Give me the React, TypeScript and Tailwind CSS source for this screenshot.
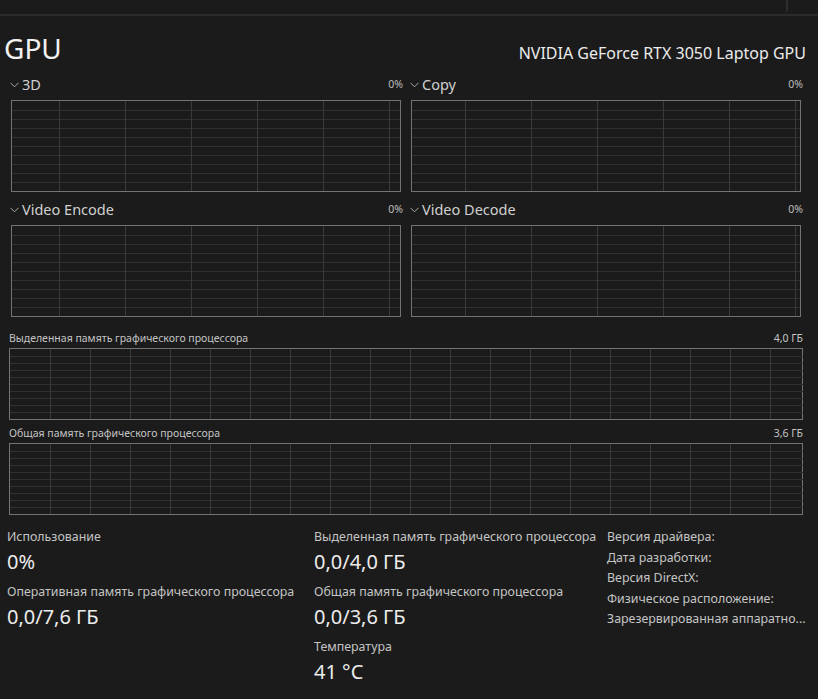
import React from "react";

const FONT = { fontFamily: '"Noto Sans", "Open Sans", sans-serif' };

type GridProps = {
  w: number;
  h: number;
  rows: number;
  colStart: number;
  colStep: number;
};

function Grid({ w, h, rows, colStart, colStep }: GridProps) {
  const hs: number[] = [];
  for (let i = 1; i < rows; i++) hs.push(Math.round((h / rows) * i) + 0.5);
  const vs: number[] = [];
  for (let x = colStart; x < w; x += colStep) vs.push(x + 0.5);
  return (
    <svg width={w} height={h} className="block">
      {hs.map((y) => (
        <line key={`h${y}`} x1={0} x2={w} y1={y} y2={y} stroke="#303030" strokeWidth={1} />
      ))}
      {vs.map((x) => (
        <line key={`v${x}`} x1={x} x2={x} y1={0} y2={h} stroke="#3a3a3a" strokeWidth={1} />
      ))}
    </svg>
  );
}

function Chevron() {
  return (
    <svg width="9" height="6" viewBox="0 0 9 6" className="mr-[3px] mt-[1px]">
      <path d="M0.5 0.8 L4.5 4.8 L8.5 0.8" fill="none" stroke="#a8a8a8" strokeWidth="1" />
    </svg>
  );
}

function EngineChart({ title, colStart }: { title: string; colStart: number }) {
  return (
    <div className="flex flex-col">
      <div className="flex h-[26px] items-start justify-between pl-[1px] pt-[1px]">
        <div className="flex items-center text-[14.5px] leading-[18px] text-[#d0d0d0]">
          <Chevron />
          {title}
        </div>
        <span className="pt-[1px] text-[10.5px] leading-[16px] text-[#bdbdbd]">0%</span>
      </div>
      <div className="mx-[2px] border border-[#737373]">
        <Grid w={388} h={90} rows={10} colStart={colStart} colStep={66} />
      </div>
    </div>
  );
}

function MemoryChart({ title, total }: { title: string; total: string }) {
  return (
    <div className="flex flex-col">
      <div className="flex h-[23px] items-end justify-between pb-[3px] text-[10.5px] leading-[14px] text-[#c4c4c4]">
        <span>{title}</span>
        <span>{total}</span>
      </div>
      <div className="border border-[#737373]">
        <Grid w={793} h={70} rows={10} colStart={40} colStep={40} />
      </div>
    </div>
  );
}

function Stat({ label, value }: { label: string; value: string }) {
  return (
    <div className="flex flex-col">
      <span className="h-[20px] whitespace-nowrap text-[12.4px] leading-[20px] text-[#c4c4c4]">{label}</span>
      <span className="h-[35px] text-[20px] leading-[30px] text-[#ececec]">{value}</span>
    </div>
  );
}

export default function App() {
  const info = [
    "Версия драйвера:",
    "Дата разработки:",
    "Версия DirectX:",
    "Физическое расположение:",
    "Зарезервированная аппаратно...",
  ];

  return (
    <div className="h-[699px] w-[818px] overflow-hidden bg-[#1b1b1b]" style={FONT}>
      <div className="flex h-[14px] justify-end pr-[30px]">
        <div className="h-[11px] w-[2px] bg-[#2e2e2e]" />
      </div>
      <div className="h-[2px] bg-[#2b2b2b]" />

      <div className="flex items-end justify-between pl-[4px] pr-[12px] pt-[14px]">
        <h1 className="text-[28px] leading-[36px] text-[#f2f2f2]">GPU</h1>
        <span className="pb-[1px] text-[16px] leading-[24px] text-[#ececec]">
          NVIDIA GeForce RTX 3050 Laptop GPU
        </span>
      </div>

      <div className="mt-[8px] grid grid-cols-2 gap-x-[6px] gap-y-[7px] pl-[9px] pr-[15px]">
        <EngineChart title="3D" colStart={47} />
        <EngineChart title="Copy" colStart={53} />
        <EngineChart title="Video Encode" colStart={47} />
        <EngineChart title="Video Decode" colStart={53} />
      </div>

      <div className="mt-[8px] flex flex-col pl-[9px] pr-[15px]">
        <MemoryChart title="Выделенная память графического процессора" total="4,0 ГБ" />
        <MemoryChart title="Общая память графического процессора" total="3,6 ГБ" />
      </div>

      <div className="mt-[12px] flex pl-[7px]">
        <div className="flex w-[307px] flex-col">
          <Stat label="Использование" value="0%" />
          <Stat label="Оперативная память графического процессора" value="0,0/7,6 ГБ" />
        </div>
        <div className="flex w-[293px] flex-col">
          <Stat label="Выделенная память графического процессора" value="0,0/4,0 ГБ" />
          <Stat label="Общая память графического процессора" value="0,0/3,6 ГБ" />
          <Stat label="Температура" value="41 °C" />
        </div>
        <div className="flex w-[198px] flex-col">
          {info.map((t) => (
            <span
              key={t}
              className="h-[20.5px] whitespace-nowrap text-[12.4px] leading-[20.5px] text-[#c4c4c4]"
            >
              {t}
            </span>
          ))}
        </div>
      </div>
    </div>
  );
}
